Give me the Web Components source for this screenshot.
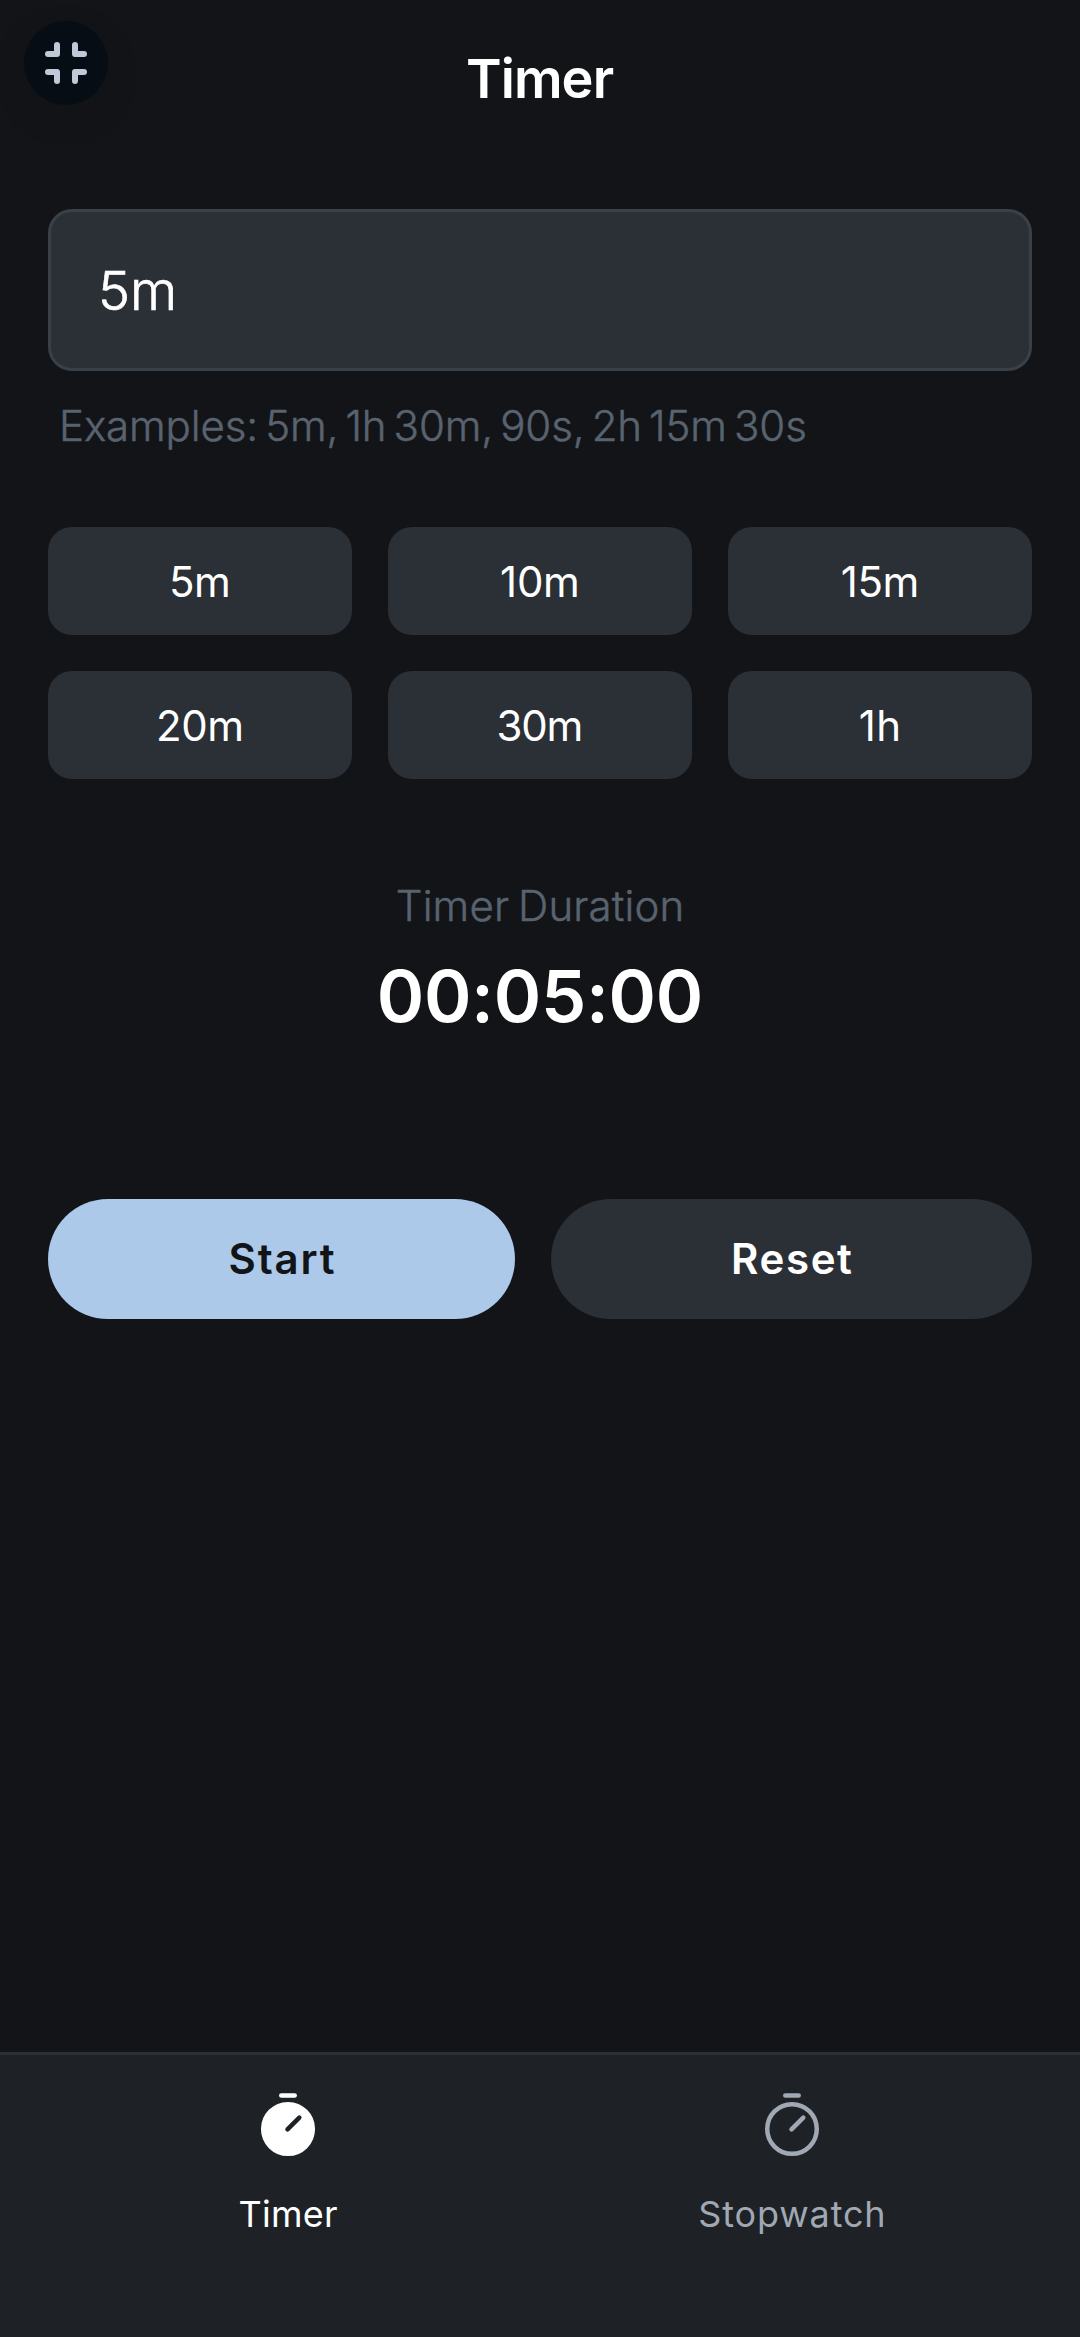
<!DOCTYPE html>
<html lang="en">
<head>
<meta charset="utf-8">
<title>Timer</title>
<style>
  html, body { margin: 0; height: 100%; background: #121418; }
  body { font-family: Inter, "Open Sans", sans-serif; color: #fff; }
</style>
</head>
<body>
<timer-app></timer-app>

<script>
const define = (name, html) => {
  const template = document.createElement('template');
  template.innerHTML = html;
  customElements.define(name, class extends HTMLElement {
    constructor() {
      super();
      this.attachShadow({ mode: 'open' }).append(template.content.cloneNode(true));
    }
  });
};

/* One line of text; --track is the letter spacing, its trailing share is cancelled. */
define('text-line', `
  <style>
    :host { display: block; white-space: nowrap; }
    span { display: inline-block; letter-spacing: var(--track, 0px); margin-right: calc(-1 * var(--track, 0px)); }
  </style>
  <span><slot></slot></span>`);

define('collapse-button', `
  <style>
    :host { display: block; width: 84px; height: 84px; border-radius: 50%; background: #070d14;
      box-shadow: 0 12px 24px rgba(20, 20, 20, .5); }
    svg { display: block; }
  </style>
  <svg width="84" height="84" viewBox="0 0 84 84" fill="none" stroke="#bfc9d8" stroke-width="6" stroke-linecap="round" stroke-linejoin="round">
    <path d="M24 33H33V24M51 24V33H60M24 51H33V60M60 51H51V60"/>
  </svg>`);

define('app-header', `
  <style>
    :host { display: flex; height: 157px; align-items: center; justify-content: center; position: relative;
      font-size: 54px; font-weight: 600; line-height: 66px; --track: -.9px; }
    collapse-button { position: absolute; left: 24px; top: 21px; }
  </style>
  <collapse-button></collapse-button>
  <text-line><slot></slot></text-line>`);

define('duration-field', `
  <style>
    :host { display: flex; align-items: center; box-sizing: border-box; height: 162px; padding: 2px 0 0 47px;
      border: 3px solid #3a4047; border-radius: 24px; background: #2b2f36;
      font-size: 54px; font-weight: 300; line-height: 66px; --track: 0px; -webkit-text-stroke: .7px currentColor; }
  </style>
  <text-line><slot></slot></text-line>`);

define('preset-chip', `
  <style>
    :host { display: flex; align-items: center; justify-content: center; box-sizing: border-box; height: 108px;
      padding-top: 2px; border-radius: 24px; background: #2b2f36; font-size: 42px; font-weight: 400; line-height: 50px; }
  </style>
  <text-line><slot></slot></text-line>`);

define('preset-grid', `
  <style>
    :host { display: grid; grid-template-columns: repeat(3, 1fr); gap: 36px; }
  </style>
  <slot></slot>`);

define('timer-readout', `
  <style>
    :host { display: flex; flex-direction: column; align-items: center; gap: 22px; }
    .label { font-size: 42px; font-weight: 300; line-height: 50px; color: #59636f; word-spacing: -3px; --track: .15px;
      -webkit-text-stroke: .5px currentColor; }
    .time { font-size: 72px; font-weight: 600; line-height: 86px; --track: -.3px; }
  </style>
  <text-line class="label"><slot name="label"></slot></text-line>
  <text-line class="time"><slot></slot></text-line>`);

define('pill-button', `
  <style>
    :host { display: flex; align-items: center; justify-content: center; height: 120px; border-radius: 60px;
      background: #2b2f36; font-size: 42px; font-weight: 600; line-height: 50px; }
    :host([primary]) { background: #acc9e9; color: #121418; }
  </style>
  <text-line><slot></slot></text-line>`);

define('nav-tab', `
  <style>
    :host { flex: 1; display: flex; flex-direction: column; align-items: center; padding-top: 33px;
      font-size: 36px; font-weight: 400; line-height: 44px; color: #a0a8b4; --track: .85px; }
    :host([active]) { color: #fff; --track: .25px; }
    svg { display: block; margin-bottom: 32px; }
    .face { fill: none; stroke: currentColor; }
    .hand { stroke: currentColor; }
    :host([active]) .face { fill: currentColor; }
    :host([active]) .hand { stroke: #1e2125; }
  </style>
  <svg width="72" height="72" viewBox="0 0 72 72" fill="none" stroke-width="4.5" stroke-linecap="round">
    <path d="M29.3 7.5H42.7" stroke="currentColor"/>
    <circle class="face" cx="36" cy="41" r="24.8"/>
    <path class="hand" d="M35.5 41.3L47.3 29.7"/>
  </svg>
  <text-line><slot></slot></text-line>`);

define('tab-bar', `
  <style>
    :host { display: flex; box-sizing: border-box; height: 285px; padding: 0 36px; border-top: 3px solid #2b2f36; background: #1e2125; }
  </style>
  <slot></slot>`);

define('timer-app', `
  <style>
    :host { display: flex; flex-direction: column; width: 1080px; height: 2337px; background: #121418; overflow: hidden; }
    main { flex: 1; display: flex; flex-direction: column; padding: 52px 48px 0; }
    .hint { margin: 30px 0 76px; padding-left: 11px; font-size: 42px; font-weight: 300; line-height: 50px; color: #59636f;
      word-spacing: -4.6px; --track: -.1px; -webkit-text-stroke: .5px currentColor; }
    timer-readout { margin: 102px 0 160px; }
    .actions { display: flex; gap: 36px; }
    .start { flex: 0 0 467px; --track: 1.8px; }
    .reset { flex: 1; --track: 1.6px; }
  </style>
  <app-header>Timer</app-header>
  <main>
    <duration-field>5m</duration-field>
    <text-line class="hint">Examples: 5m, 1h 30m, 90s, 2h 15m 30s</text-line>
    <preset-grid>
      <preset-chip style="--track:-.5px">5m</preset-chip>
      <preset-chip style="--track:-.3px">10m</preset-chip>
      <preset-chip style="--track:-.5px">15m</preset-chip>
      <preset-chip style="--track:-.5px">20m</preset-chip>
      <preset-chip style="--track:-1.2px">30m</preset-chip>
      <preset-chip style="--track:.5px">1h</preset-chip>
    </preset-grid>
    <timer-readout><span slot="label">Timer Duration</span>00:05:00</timer-readout>
    <div class="actions">
      <pill-button class="start" primary>Start</pill-button>
      <pill-button class="reset">Reset</pill-button>
    </div>
  </main>
  <tab-bar>
    <nav-tab active>Timer</nav-tab>
    <nav-tab>Stopwatch</nav-tab>
  </tab-bar>`);
</script>
</body>
</html>
